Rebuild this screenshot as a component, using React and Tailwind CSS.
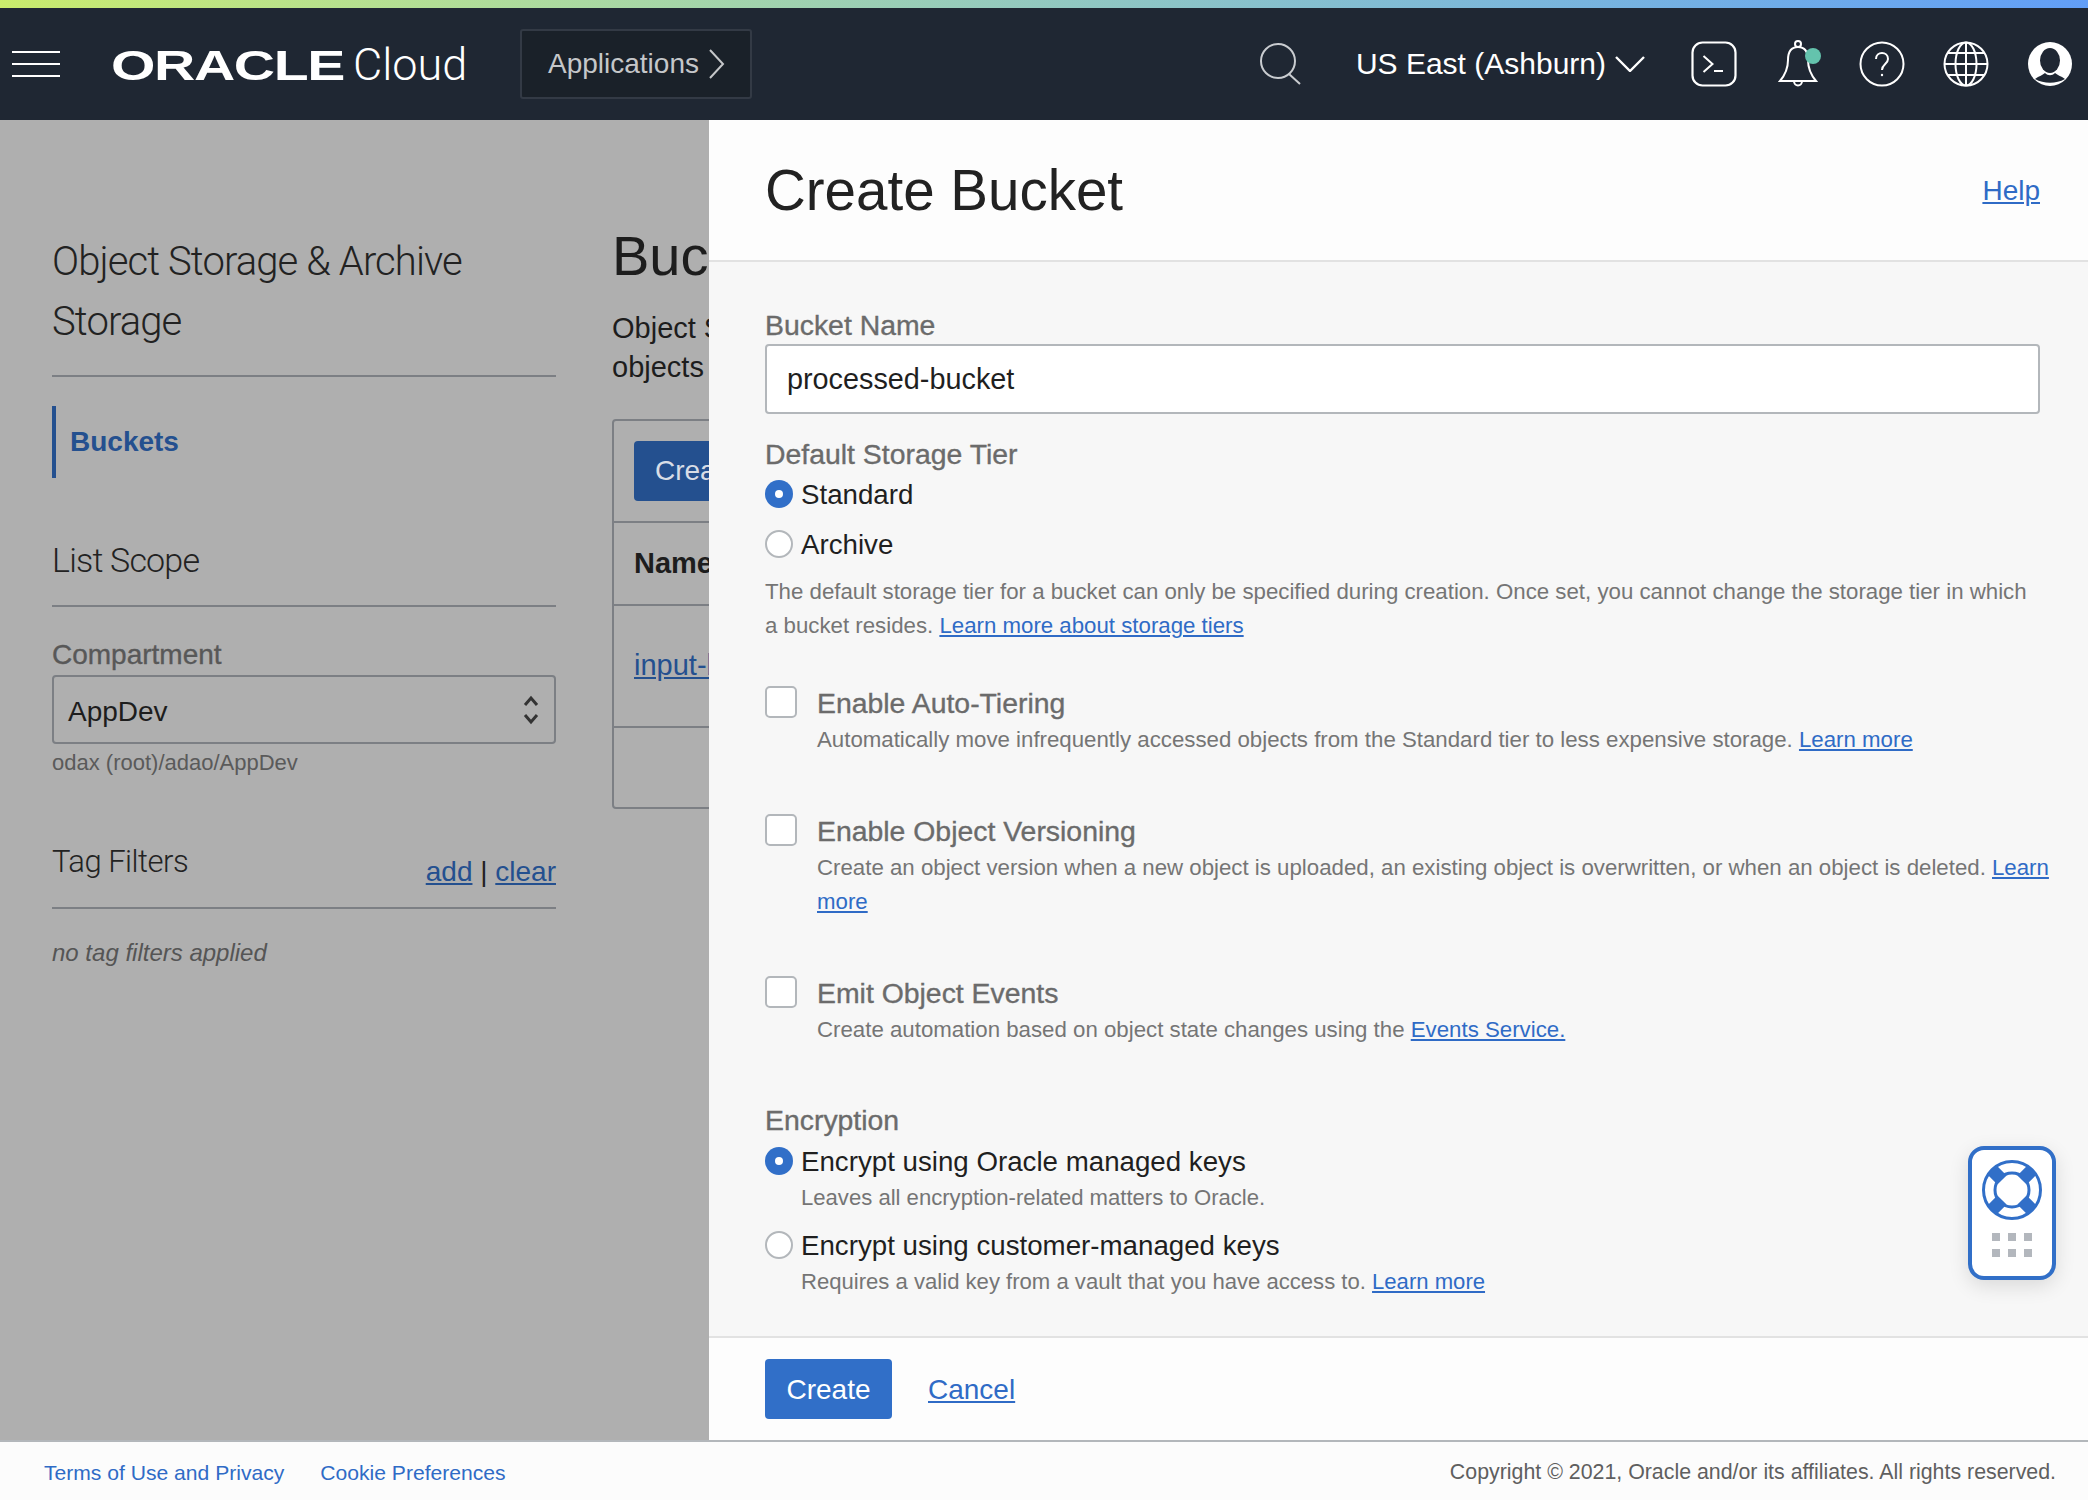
import React from 'react';

const sans = "font-['Liberation_Sans',Arial,sans-serif]";
const heavy = '[-webkit-text-stroke:0.35px]';

const Link = ({ children, className = '' }) => (
  <a className={`text-[#2f6bc6] underline underline-offset-2 decoration-2 ${className}`}>{children}</a>
);

const Radio = ({ checked }) =>
  checked ? (
    <span className="flex h-[28px] w-[28px] shrink-0 items-center justify-center rounded-full bg-[#316fc8]">
      <span className="h-[8px] w-[8px] rounded-full bg-white" />
    </span>
  ) : (
    <span className="h-[28px] w-[28px] shrink-0 rounded-full border-2 border-[#b3b7bb] bg-white" />
  );

const CheckOption = ({ label, className, children }) => (
  <div className={`flex ${className}`}>
    <span className="h-[32px] w-[32px] shrink-0 rounded-[5px] border-2 border-[#b3b7bb] bg-white" />
    <div className="ml-[20px] min-w-0 flex-1">
      <div className={`text-[28.4px] leading-[34px] text-[#6b6b6b] ${heavy}`}>{label}</div>
      <div className="mt-[3px] text-[22.25px] leading-[34px] text-[#757575]">{children}</div>
    </div>
  </div>
);

const RadioOption = ({ checked, label, className = '' }) => (
  <div className={`flex h-[34px] items-center gap-[8px] text-[27.7px] text-[#1f1f1f] ${className}`}>
    <Radio checked={checked} />
    <span className="pt-[2px]">{label}</span>
  </div>
);

const HeaderIcons = () => (
  <div className="ml-[46px] flex items-center">
    {/* cloud shell */}
    <svg width="46" height="46" viewBox="0 0 46 46" fill="none" stroke="white" strokeWidth="2.2">
      <rect x="1.5" y="1.5" width="43" height="43" rx="10" />
      <path d="M12.5 15l9 8-9 8M23 30h9" strokeWidth="2" />
    </svg>
    {/* bell */}
    <svg className="ml-[41px]" width="44" height="48" viewBox="0 0 44 48" fill="none" stroke="white" strokeWidth="2">
      <path d="M20 7C12 7 10 14 10 20c0 8-3 15-8 21h36c-5-6-8-13-8-21 0-6-2-13-10-13z" />
      <circle cx="20" cy="4" r="3" />
      <path d="M16 41c0 6 8 6 8 0" />
      <circle cx="35" cy="16" r="8" fill="#64c3ad" stroke="none" />
    </svg>
    {/* help */}
    <svg className="ml-[37px]" width="46" height="46" viewBox="0 0 46 46" fill="none" stroke="white" strokeWidth="2">
      <circle cx="23" cy="23" r="21.5" />
      <path d="M17 18c0-8 12-8 12 0 0 5-6 5-6 11" />
      <circle cx="23" cy="34" r="1.2" fill="white" stroke="none" />
    </svg>
    {/* region globe */}
    <svg className="ml-[38px]" width="46" height="46" viewBox="0 0 46 46" fill="none" stroke="white" strokeWidth="2">
      <circle cx="23" cy="23" r="21.5" />
      <ellipse cx="23" cy="23" rx="10.5" ry="21.5" />
      <path d="M23 1.5v43M1.5 23h43M5 12h36M5 34h36" />
    </svg>
    {/* user */}
    <svg className="ml-[38px]" width="46" height="46" viewBox="0 0 46 46">
      <circle cx="23" cy="23" r="22" fill="white" />
      <ellipse cx="23" cy="19.5" rx="10" ry="12.5" fill="#1f2733" />
      <path d="M8 38c4-3 8-4 10-6 3 3 7 3 10 0 2 2 6 3 10 6-9 5-21 5-30 0z" fill="#1f2733" />
    </svg>
  </div>
);

const HelpWidget = () => (
  <div className="absolute right-[32px] top-[1026px] flex h-[134px] w-[88px] flex-col items-center rounded-[16px] border-4 border-[#316fc8] bg-white pt-[10px] shadow-[0_6px_20px_rgba(0,0,0,0.12)]">
    <svg width="60" height="60" viewBox="0 0 60 60" fill="none" stroke="#316fc8">
      <circle cx="30" cy="30" r="28.5" strokeWidth="3" />
      <circle cx="30" cy="30" r="17" strokeWidth="3" />
      <path d="M10 10l10 10M50 10L40 20M10 50l10-10M50 50L40 40" strokeWidth="13" />
    </svg>
    <div className="mt-[13px] grid grid-cols-3 gap-[8px]">
      {[0, 1, 2, 3, 4, 5].map((i) => (
        <span key={i} className="h-[8px] w-[8px] bg-[#b3b7bd]" />
      ))}
    </div>
  </div>
);

export default function App() {
  return (
    <div className={`flex h-[1500px] w-[2088px] flex-col overflow-hidden bg-white ${sans}`}>
      <div className="h-[8px] shrink-0 bg-gradient-to-r from-[#c9ec6c] to-[#629ef7]" />

      {/* Header */}
      <header className="flex h-[112px] shrink-0 items-center bg-[#1f2733] pl-[12px] pr-[15px] text-white">
        <div className="flex w-[48px] flex-col gap-[10px]">
          <span className="h-[2px] bg-white" />
          <span className="h-[2px] bg-white" />
          <span className="h-[2px] bg-white" />
        </div>
        <div className="ml-[51px] flex w-[409px] items-baseline">
          <span className="inline-block w-[242px] origin-left scale-x-[1.36] text-[42px] font-bold leading-none tracking-[-1px]">ORACLE</span>
          <span className="font-['Roboto',sans-serif] text-[45px] font-light leading-none">Cloud</span>
        </div>
        <div className="flex h-[70px] w-[232px] items-center rounded-[3px] border-2 border-[#333a45] bg-[#1a2129] pl-[26px] text-[28px] text-[#c5c7c9]">
          Applications
          <svg className="ml-[10px]" width="16" height="30" viewBox="0 0 16 30" fill="none" stroke="#c5c7c9" strokeWidth="2">
            <path d="M1 1l13 14L1 29" />
          </svg>
        </div>
        <div className="ml-auto flex items-center">
          <svg width="42" height="42" viewBox="0 0 42 42" fill="none" stroke="#c9ccd0" strokeWidth="2">
            <circle cx="18" cy="18" r="17" />
            <path d="M29 31l11 10" />
          </svg>
          <span className="ml-[54px] text-[30px] leading-none">US East (Ashburn)</span>
          <svg className="ml-[9px]" width="30" height="16" viewBox="0 0 30 16" fill="none" stroke="white" strokeWidth="2.4">
            <path d="M1 1l14 14L29 1" />
          </svg>
          <HeaderIcons />
        </div>
      </header>

      <main className="relative flex min-h-0 flex-1">
        {/* Dimmed page behind the drawer */}
        <section className="flex w-[709px] shrink-0 overflow-hidden bg-[#afafaf]">
          <aside className="ml-[52px] w-[504px] shrink-0 pt-[112px]">
            <h2 className="border-b-2 border-[#7c7f84] pb-[23px] font-['Roboto',sans-serif] text-[40px] font-light leading-[60px] tracking-[-0.9px] text-[#222]">
              Object Storage &amp; Archive Storage
            </h2>
            <div className="mt-[29px] flex h-[72px] items-center border-l-4 border-[#24508f] pl-[14px] text-[28px] font-bold text-[#24508f]">
              Buckets
            </div>
            <h3 className="mt-[58px] border-b-2 border-[#7c7f84] pb-[21px] font-['Roboto',sans-serif] text-[34px] font-light leading-[48px] tracking-[-0.8px] text-[#222]">
              List Scope
            </h3>
            <div className={`mt-[31px] text-[28px] leading-[34px] text-[#585858] ${heavy}`}>Compartment</div>
            <div className="mt-[3px] flex h-[69px] items-center justify-between rounded-[4px] border-2 border-[#7c7f84] pl-[14px] pr-[14px] pt-[4px] text-[28px] text-[#1d1d1d]">
              AppDev
              <svg className="-mt-[4px]" width="18" height="34" viewBox="0 0 18 34" fill="none" stroke="#333" strokeWidth="3">
                <path d="M3 12l6-7 6 7M3 22l6 7 6-7" />
              </svg>
            </div>
            <div className="mt-[2px] text-[22px] leading-[34px] text-[#5a5a5a]">odax (root)/adao/AppDev</div>
            <div className="mt-[58px] flex items-end justify-between border-b-2 border-[#7c7f84] pb-[18px]">
              <span className="mb-[3px] font-['Roboto',sans-serif] text-[31px] font-light leading-[48px] tracking-[-0.5px] text-[#222]">Tag Filters</span>
              <span className="text-[28px] leading-[34px] text-[#222]">
                <a className="text-[#24508f] underline underline-offset-2">add</a> | <a className="text-[#24508f] underline underline-offset-2">clear</a>
              </span>
            </div>
            <div className="mt-[27px] text-[24px] italic leading-[34px] text-[#555]">no tag filters applied</div>
          </aside>
          <div className="ml-[56px] w-[800px] shrink-0 pt-[100px] text-[#1d1d1d]">
            <h1 className="text-[56px] leading-[72px]">Buckets</h1>
            <p className="mt-[17px] text-[29px] leading-[39px]">
              Object Storage<br />objects
            </p>
            <div className="mt-[32px] h-[390px] rounded-[4px] border-2 border-[#7c7f84]">
              <div className="flex h-[102px] items-center border-b-2 border-[#7c7f84] pl-[20px]">
                <span className="flex h-[60px] w-[126px] items-center justify-center rounded-[4px] bg-[#24508f] text-[28px] text-[#d8dde6]">Create</span>
              </div>
              <div className="flex h-[83px] items-center border-b-2 border-[#7c7f84] pl-[20px] text-[29px] font-bold">Name</div>
              <div className="flex h-[122px] items-center border-b-2 border-[#7c7f84] pl-[20px] text-[29px]">
                <a className="text-[#24508f] underline underline-offset-2">input-bucket</a>
              </div>
            </div>
          </div>
        </section>

        {/* Create Bucket drawer */}
        <section className="flex min-w-0 flex-1 flex-col bg-[#f7f7f7]">
          <div className="flex h-[142px] shrink-0 items-center justify-between border-b-2 border-[#e2e2e2] bg-[#fdfdfd] pl-[56px] pr-[48px] pt-[2px]">
            <h1 className="text-[56.5px] font-normal text-[#222]">Create Bucket</h1>
            <Link className="text-[28px]">Help</Link>
          </div>
          <div className="min-h-0 flex-1 pl-[56px] pr-[39px] pt-[46px]">
            <div className={`text-[28.4px] leading-[34px] text-[#6b6b6b] ${heavy}`}>Bucket Name</div>
            <div className="mr-[9px] mt-[2px] flex h-[70px] items-center rounded-[4px] border-2 border-[#b3b7bb] bg-white pl-[20px] pt-[2px] text-[28.8px] text-[#1f1f1f]">
              processed-bucket
            </div>

            <div className={`mt-[23px] text-[28.4px] leading-[34px] text-[#6b6b6b] ${heavy}`}>Default Storage Tier</div>
            <RadioOption checked label="Standard" className="mt-[6px]" />
            <RadioOption label="Archive" className="mt-[16px]" />
            <p className="mr-[16px] mt-[14px] text-[22.25px] leading-[34px] text-[#757575]">
              The default storage tier for a bucket can only be specified during creation. Once set, you cannot change the storage tier in which a bucket resides. <Link>Learn more about storage tiers</Link>
            </p>

            <CheckOption label="Enable Auto-Tiering" className="mt-[43px]">
              Automatically move infrequently accessed objects from the Standard tier to less expensive storage. <Link>Learn more</Link>
            </CheckOption>
            <CheckOption label="Enable Object Versioning" className="mt-[57px]">
              Create an object version when a new object is uploaded, an existing object is overwritten, or when an object is deleted. <Link>Learn more</Link>
            </CheckOption>
            <CheckOption label="Emit Object Events" className="mt-[57px]">
              Create automation based on object state changes using the <Link>Events Service.</Link>
            </CheckOption>

            <div className={`mt-[56px] text-[28.4px] leading-[34px] text-[#6b6b6b] ${heavy}`}>Encryption</div>
            <RadioOption checked label="Encrypt using Oracle managed keys" className="mt-[7px]" />
            <p className="ml-[36px] mt-[3px] text-[22.1px] leading-[34px] text-[#757575]">Leaves all encryption-related matters to Oracle.</p>
            <RadioOption label="Encrypt using customer-managed keys" className="mt-[13px]" />
            <p className="ml-[36px] mt-[3px] text-[22.1px] leading-[34px] text-[#757575]">
              Requires a valid key from a vault that you have access to. <Link>Learn more</Link>
            </p>
          </div>
          <div className="flex h-[104px] shrink-0 items-center gap-[36px] border-t-2 border-[#e2e2e2] bg-[#fdfdfd] pl-[56px]">
            <button className="h-[60px] w-[127px] rounded-[4px] bg-[#316fc8] pt-[1px] text-[28px] text-white">Create</button>
            <Link className="pt-[2px] text-[28px]">Cancel</Link>
          </div>
        </section>
        <HelpWidget />
      </main>

      {/* Footer */}
      <footer className="flex h-[60px] shrink-0 items-center justify-between border-t-2 border-[#b3b7bb] bg-[#fcfcfc] pl-[44px] pr-[32px] pt-[3px]">
        <div className="flex gap-[36px] text-[21.1px] text-[#2f6bc6]">
          <a>Terms of Use and Privacy</a>
          <a>Cookie Preferences</a>
        </div>
        <span className="text-[21.35px] text-[#5f5f5f]">Copyright © 2021, Oracle and/or its affiliates. All rights reserved.</span>
      </footer>
    </div>
  );
}
